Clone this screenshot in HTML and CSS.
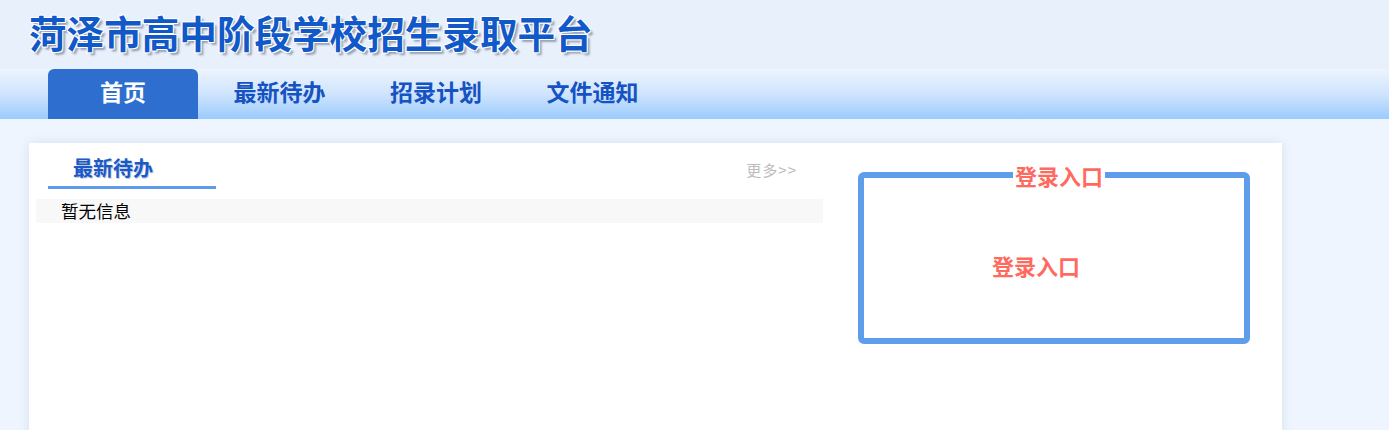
FILE: index.html
```html
<!DOCTYPE html>
<html lang="zh-CN">
<head>
<meta charset="utf-8">
<title>菏泽市高中阶段学校招生录取平台</title>
<link rel="stylesheet" href="styles.css">
</head>
<body>
<header class="header">
  <h1 class="site-title">菏泽市高中阶段学校招生录取平台</h1>
</header>
<nav class="nav">
  <a class="nav-item active" href="#">首页</a>
  <a class="nav-item" href="#">最新待办</a>
  <a class="nav-item" href="#">招录计划</a>
  <a class="nav-item" href="#">文件通知</a>
</nav>
<main class="main">
  <section class="card">
    <div class="todo">
      <div class="todo-head">
        <div class="todo-tab">最新待办</div>
        <a class="more" href="#">更多&gt;&gt;</a>
      </div>
      <div class="todo-row">暂无信息</div>
    </div>
    <div class="login">
      <fieldset class="login-box">
        <legend class="login-legend">登录入口</legend>
        <div class="login-text">登录入口</div>
      </fieldset>
    </div>
  </section>
</main>
</body>
</html>
```

FILE: styles.css
```css
* { box-sizing: border-box; }
html, body {
  margin: 0;
  padding: 0;
}
body {
  background: #eef5fe;
  font-family: "Noto Sans CJK SC", "Microsoft YaHei", sans-serif;
  overflow: hidden;
}
.header {
  height: 69px;
  background: #e8f0fc;
  padding-left: 29px;
  display: flex;
  align-items: center;
}
.site-title {
  margin: -5px 0 0 0;
  font-size: 37.6px;
  font-weight: 700;
  line-height: 1;
  color: #1159c9;
  text-shadow: 1px 1px 0 #fff, -1px -1px 0 #fff, 1px -1px 0 #fff, -1px 1px 0 #fff, 3px 3px 2px #9aa3b3;
}
.nav {
  height: 50px;
  background: linear-gradient(to bottom, #edf4fd 0%, #cfe4fd 50%, #9bcbfe 100%);
  padding-left: 48px;
  display: flex;
  gap: 6.5px;
}
.nav-item {
  width: 150px;
  display: flex;
  align-items: center;
  justify-content: center;
  padding-bottom: 6px;
  font-size: 23px;
  font-weight: 700;
  color: #1552c2;
  text-decoration: none;
  border-radius: 6px 6px 0 0;
}
.nav-item.active {
  background: #2d6ecf;
  color: #fff;
}
.main {
  padding: 24px 0 0 29px;
}
.card {
  width: 1253px;
  height: 300px;
  background: #fff;
  box-shadow: 0 0 10px rgba(60, 80, 120, 0.12);
  display: flex;
}
.todo {
  width: 794px;
  padding-left: 7px;
}
.todo-head {
  height: 56px;
  display: flex;
  justify-content: space-between;
  align-items: flex-start;
  padding: 11px 26px 0 12px;
}
.todo-tab {
  width: 168px;
  height: 35px;
  padding-left: 25px;
  font-size: 20px;
  font-weight: 700;
  color: #1a5ac8;
  line-height: 28px;
  border-bottom: 3px solid #5e9bea;
  text-shadow: 1px 1px 1px #b9c4da;
}
.more {
  font-size: 15px;
  color: #bdbdbd;
  text-decoration: none;
  line-height: 32px;
  letter-spacing: 1px;
}
.todo-row {
  height: 24px;
  background: #f8f8f8;
  padding-left: 25px;
  font-size: 17.5px;
  line-height: 24px;
  color: #000;
}
.login {
  flex: 1;
  padding: 21px 0 0 35px;
}
.login-box {
  margin: 0;
  width: 392px;
  height: 180px;
  border: 6px solid #5e9de9;
  border-radius: 6px;
  padding: 0;
}
.login-legend {
  margin: 0 0 0 149px;
  padding: 0 2px;
  font-size: 22px;
  font-weight: 700;
  line-height: 22px;
  color: #ff6a60;
}
.login-text {
  padding: 66px 0 0 128px;
  font-size: 22px;
  font-weight: 700;
  line-height: 26px;
  color: #ff6a60;
}
```
